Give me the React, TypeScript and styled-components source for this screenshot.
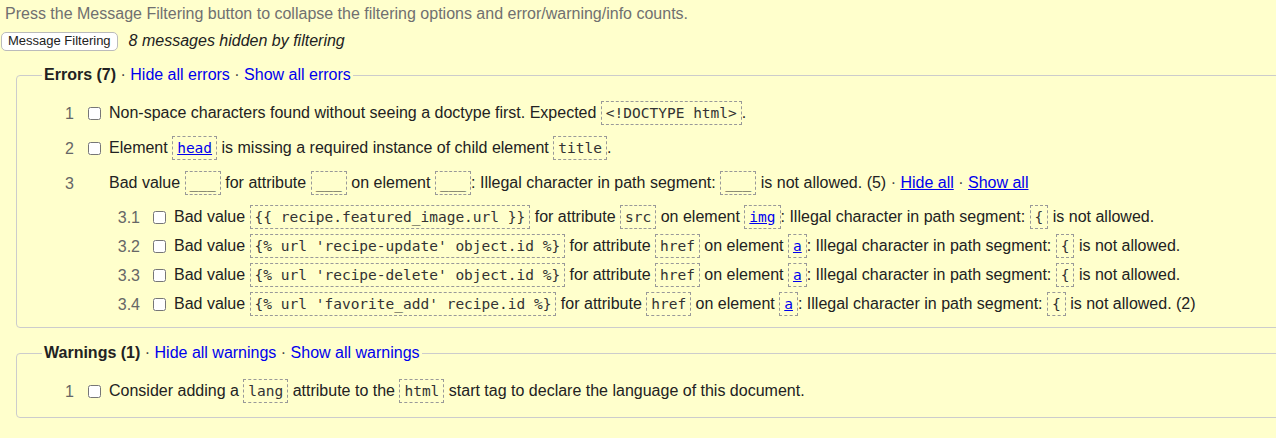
import styled, { createGlobalStyle } from 'styled-components';

const GlobalStyle = createGlobalStyle`
  html, body {
    margin: 0;
    padding: 0;
    background: #ffffcc;
    overflow: hidden;
  }
  body {
    font-family: "Liberation Sans", Arial, sans-serif;
    font-size: 16px;
    color: #222;
  }
`;

const Page = styled.div`
  padding: 4px 0 0 0;
`;

const Intro = styled.p`
  margin: 0 0 7px 5px;
  line-height: 20px;
  color: #707070;
`;

const FilterBar = styled.div`
  display: flex;
  align-items: center;
  gap: 11px;
  height: 20px;
  padding-left: 1px;
`;

const FilterButton = styled.button`
  font-family: "Liberation Sans", Arial, sans-serif;
  font-size: 13px;
  color: #222;
  background: #fff;
  border: 1px solid #bbb;
  border-radius: 5px;
  padding: 1px 6px 2px;
  line-height: 14px;
  margin-top: 1px;
`;

const Hidden = styled.span`
  font-style: italic;
`;

const Group = styled.fieldset<{ $pb: number; $mt: number }>`
  margin: ${(p) => p.$mt}px -40px 0 16px;
  padding: 11px 0 ${(p) => p.$pb}px 0;
  border: 1px solid #ccc;
  border-radius: 4px;
  min-width: 0;
`;

const Legend = styled.legend`
  margin-left: 25px;
  padding: 0 2px;
  line-height: 20px;
`;

const Title = styled.b`
  font-weight: bold;
`;

const Dot = styled.span`
  color: #444;
`;

const Action = styled.a<{ $underline?: boolean }>`
  color: #0000ee;
  text-decoration: ${(p) => (p.$underline ? 'underline' : 'none')};
  cursor: pointer;
`;

const List = styled.ol`
  list-style: none;
  margin: 0;
  padding: 0;
`;

const SubList = styled.ol`
  list-style: none;
  margin: 2px 0 0 92px;
  padding: 0;
`;

const Row = styled.div<{ $sub?: boolean }>`
  display: flex;
  align-items: center;
  height: ${(p) => (p.$sub ? 29 : 35)}px;
  white-space: nowrap;
`;

const Num = styled.span<{ $sub?: boolean }>`
  width: ${(p) => (p.$sub ? 31 : 57)}px;
  text-align: right;
  color: #666;
`;

const Check = styled.input.attrs({ type: 'checkbox' })<{ $sub?: boolean }>`
  width: 13px;
  height: 13px;
  margin: 0 0 0 ${(p) => (p.$sub ? 13 : 14)}px;
  flex: none;
`;

const NoCheck = styled.span`
  width: 13px;
  margin-left: 14px;
  flex: none;
`;

const Message = styled.span`
  margin-left: 8px;
  line-height: 20px;
`;

const Code = styled.code`
  display: inline-block;
  vertical-align: middle;
  font-family: "DejaVu Sans Mono", "Liberation Mono", monospace;
  font-size: 14.5px;
  line-height: 18px;
  padding: 2px 4px;
  border: 1px dashed #999;
  color: #333;
  margin-top: -2px;
`;

const CodeLink = styled.a`
  color: #0000ee;
  text-decoration: underline;
`;

const Blank = () => <Code>___</Code>;

const subs = [
  { n: '3.1', value: "{{ recipe.featured_image.url }}", attr: 'src', el: 'img', extra: '' },
  { n: '3.2', value: "{% url 'recipe-update' object.id %}", attr: 'href', el: 'a', extra: '' },
  { n: '3.3', value: "{% url 'recipe-delete' object.id %}", attr: 'href', el: 'a', extra: '' },
  { n: '3.4', value: "{% url 'favorite_add' recipe.id %}", attr: 'href', el: 'a', extra: ' (2)' },
];

export default function App() {
  return (
    <Page>
      <GlobalStyle />
      <Intro>Press the Message Filtering button to collapse the filtering options and error/warning/info counts.</Intro>
      <FilterBar>
        <FilterButton>Message Filtering</FilterButton>
        <Hidden>8 messages hidden by filtering</Hidden>
      </FilterBar>

      <Group $pb={8} $mt={14}>
        <Legend>
          <Title>Errors (7)</Title> <Dot>·</Dot> <Action>Hide all errors</Action> <Dot>·</Dot>{' '}
          <Action>Show all errors</Action>
        </Legend>
        <List>
          <li>
            <Row>
              <Num>1</Num>
              <Check />
              <Message>
                Non-space characters found without seeing a doctype first. Expected <Code>{'<!DOCTYPE html>'}</Code>.
              </Message>
            </Row>
          </li>
          <li>
            <Row>
              <Num>2</Num>
              <Check />
              <Message>
                Element{' '}
                <Code>
                  <CodeLink>head</CodeLink>
                </Code>{' '}
                is missing a required instance of child element <Code>title</Code>.
              </Message>
            </Row>
          </li>
          <li>
            <Row>
              <Num>3</Num>
              <NoCheck />
              <Message>
                Bad value <Blank /> for attribute <Blank /> on element <Blank />: Illegal character in path segment:{' '}
                <Blank /> is not allowed. (5) <Dot>·</Dot> <Action $underline>Hide all</Action> <Dot>·</Dot>{' '}
                <Action $underline>Show all</Action>
              </Message>
            </Row>
            <SubList>
              {subs.map((s) => (
                <li key={s.n}>
                  <Row $sub>
                    <Num $sub>{s.n}</Num>
                    <Check $sub />
                    <Message>
                      Bad value <Code>{s.value}</Code> for attribute <Code>{s.attr}</Code> on element{' '}
                      <Code>
                        <CodeLink>{s.el}</CodeLink>
                      </Code>
                      : Illegal character in path segment: <Code>{'{'}</Code> is not allowed.{s.extra}
                    </Message>
                  </Row>
                </li>
              ))}
            </SubList>
          </li>
        </List>
      </Group>

      <Group $pb={8} $mt={15}>
        <Legend>
          <Title>Warnings (1)</Title> <Dot>·</Dot> <Action>Hide all warnings</Action> <Dot>·</Dot>{' '}
          <Action>Show all warnings</Action>
        </Legend>
        <List>
          <li>
            <Row>
              <Num>1</Num>
              <Check />
              <Message>
                Consider adding a <Code>lang</Code> attribute to the <Code>html</Code> start tag to declare the language of
                this document.
              </Message>
            </Row>
          </li>
        </List>
      </Group>
    </Page>
  );
}
